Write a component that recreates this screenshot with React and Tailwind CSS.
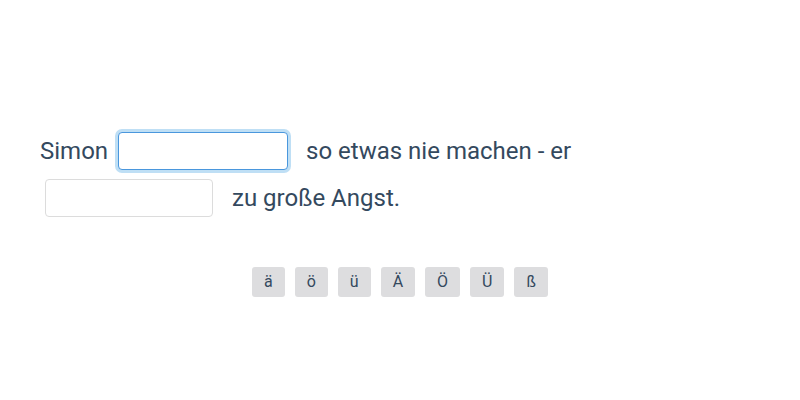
const letters = ["ä", "ö", "ü", "Ä", "Ö", "Ü", "ß"];

export default function App() {
  return (
    <div className="w-[800px] h-[400px] bg-white font-['Roboto',sans-serif] text-[#34495e]">
      <div className="pt-[132px] pl-[40px] flex flex-col gap-[9px] text-[24px]">
        <div className="flex items-center">
          <span>Simon</span>
          <input
            type="text"
            className="ml-[10px] mr-[18px] w-[170px] h-[38px] rounded-[4px] border border-[#4a97dd] bg-white shadow-[0_0_0_3px_#bfdff5] outline-none"
          />
          <span>so etwas nie machen - er</span>
        </div>
        <div className="flex items-center">
          <input
            type="text"
            className="ml-[5px] mr-[19px] w-[168px] h-[38px] rounded-[4px] border border-[#dcdcdc] bg-white outline-none"
          />
          <span>zu große Angst.</span>
        </div>
      </div>
      <div className="mt-[50px] flex justify-center gap-[10px]">
        {letters.map((l) => (
          <button
            key={l}
            className="h-[30px] px-[12px] rounded-[3px] bg-[#dddddf] text-[16px] text-[#34495e]"
          >
            {l}
          </button>
        ))}
      </div>
    </div>
  );
}
